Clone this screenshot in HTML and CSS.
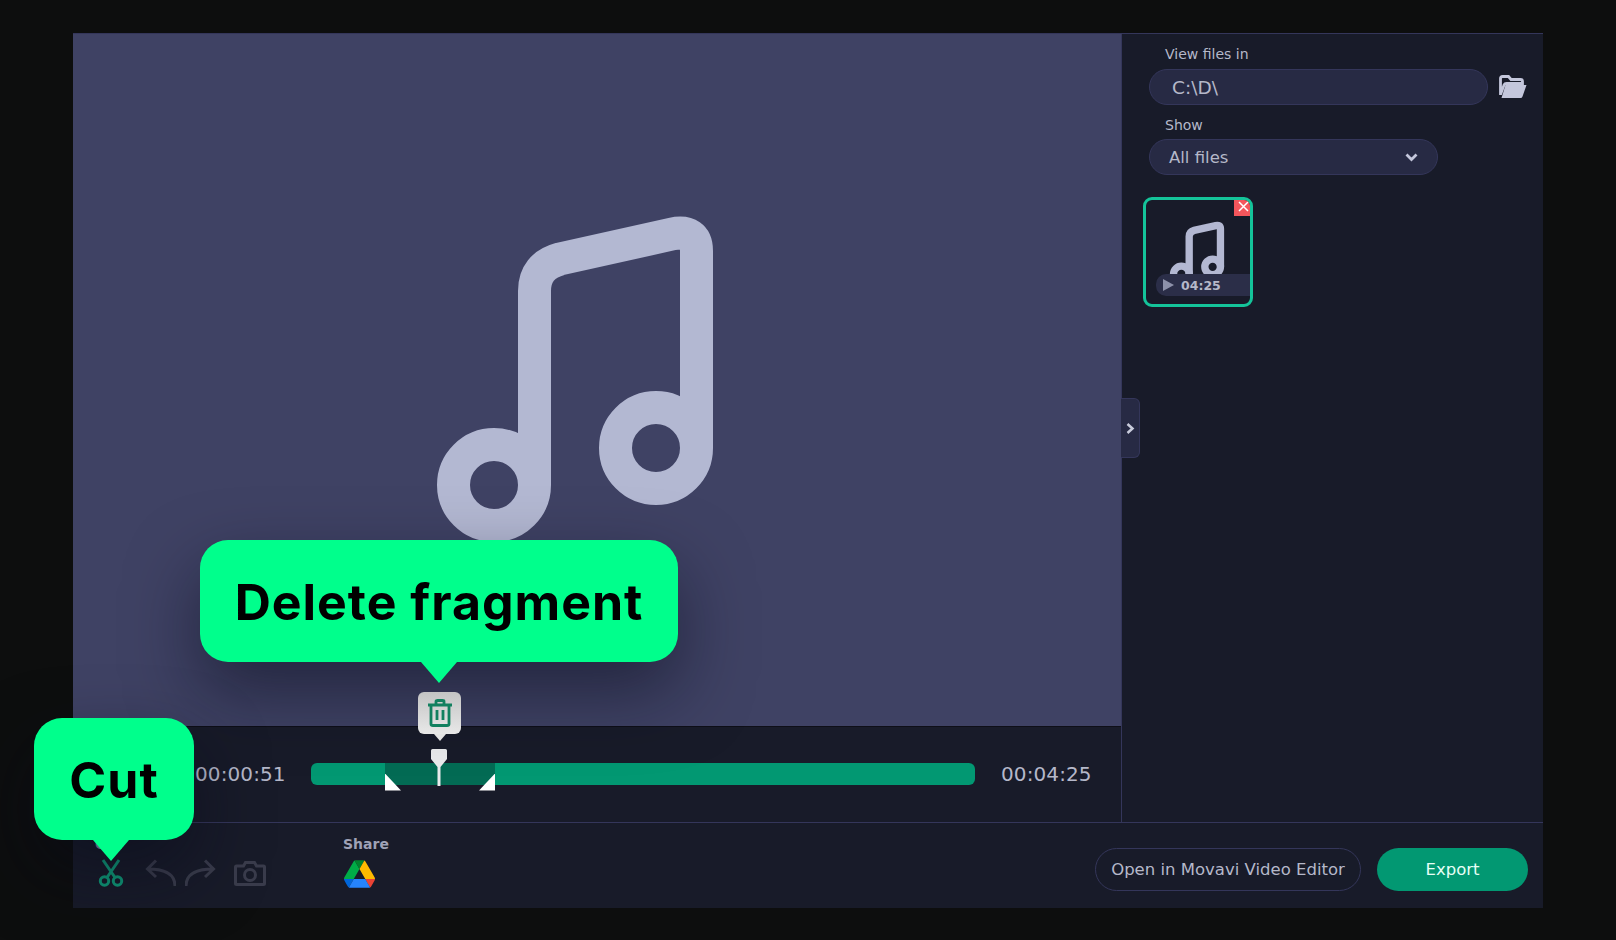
FILE: index.html
```html
<!DOCTYPE html>
<html lang="en">
<head>
<meta charset="utf-8">
<title>Movavi Video Converter - Cut</title>
<link rel="stylesheet" href="styles.css">
</head>
<body>
<div class="app">
  <div class="main">
    <div class="preview">
      <svg class="note" width="290" height="345" viewBox="430 210 290 345" fill="none" stroke="#b3b8d2" stroke-width="33">
        <circle cx="494" cy="484" r="40.5"/>
        <circle cx="656" cy="447" r="40.5"/>
        <path d="M534.5 484V290Q534.5 265 560 258L672 233Q696.5 228 696.5 250V447"/>
      </svg>
    </div>
    <div class="timeline">
      <span class="time">00:00:51</span>
      <div class="bar">
        <div class="seg seg-a"></div>
        <div class="seg seg-cut"></div>
        <div class="seg seg-b"></div>
        <i class="handle handle-l"></i>
        <i class="handle handle-r"></i>
        <svg class="playhead" width="16" height="37" viewBox="0 0 16 37"><path d="M0 1.5Q0 0 1.500 0H14.500Q16 0 16 1.500V10L9.500 18V37H6.500V18L0 10Z" fill="#e9eaec"/></svg>
      </div>
      <span class="time time-end">00:04:25</span>
    </div>
  </div>
  <aside class="side">
    <label class="field-label">View files in</label>
    <div class="path-row">
      <div class="pill path">C:\D\</div>
      <svg class="folder" width="28" height="24" viewBox="0 0 28 24"><path d="M1.500 20V3.500Q1.500 1.500 3.500 1.500H9.500L12 4.500H21.500Q23.500 4.500 23.500 6.500V8.500H7.500Q5.800 8.500 5 10L1.500 19.500" fill="none" stroke="#c4c7dc" stroke-width="2.800"/><path d="M6.500 10H27.500L23.500 21.500Q23 23 21.500 23H2.500Z" fill="#c4c7dc"/></svg>
    </div>
    <label class="field-label field-show">Show</label>
    <div class="pill select">All files
      <svg width="13" height="9" viewBox="0 0 13 9"><path d="M1.500 1.500L6.500 6.500L11.500 1.500" fill="none" stroke="#c4c7dc" stroke-width="2.800"/></svg>
    </div>
    <div class="thumb">
      <svg class="thumb-note" width="56" height="62" viewBox="430 210 290 320" fill="none" stroke="#b3b8d2" stroke-width="38">
        <circle cx="494" cy="484" r="40.5"/>
        <circle cx="656" cy="447" r="40.5"/>
        <path d="M534.5 484V290Q534.5 265 560 258L672 233Q696.5 228 696.5 250V447"/>
      </svg>
      <div class="duration">
        <svg width="11" height="12" viewBox="0 0 11 12"><path d="M0 0L11 6L0 12Z" fill="#8d91aa"/></svg>
        <span>04:25</span>
      </div>
      <button class="close"><svg width="11" height="11" viewBox="0 0 11 11"><path d="M1 1L10 10M10 1L1 10" stroke="#fff" stroke-width="1.500"/></svg></button>
    </div>
    <div class="collapse">
      <svg width="9" height="11" viewBox="0 0 9 11"><path d="M1.500 1L6.500 5.500L1.500 10" fill="none" stroke="#c9ccdc" stroke-width="2.500"/></svg>
    </div>
  </aside>
  <footer class="toolbar">
    <div class="tools">
      <span class="tool-label">Cut</span>
      <div class="tool-icons">
        <svg width="26" height="28" viewBox="0 0 26 28" fill="none" stroke="#0f9a78" stroke-width="3"><circle cx="6.500" cy="22" r="4.200"/><circle cx="19.500" cy="22" r="4.200"/><path d="M9 18.500L21 1M17 18.500L5 1"/></svg>
        <svg class="gap-a" width="31" height="28" viewBox="0 0 31 28" fill="none" stroke="#3a3c4c" stroke-width="3"><path d="M30 27C30 16 22 10 3 10M11 1.500L2.500 10L11 18"/></svg>
        <svg class="gap-b" width="31" height="28" viewBox="0 0 31 28" fill="none" stroke="#3a3c4c" stroke-width="3"><path d="M1 27C1 16 9 10 28 10M20 1.500L28.500 10L20 18"/></svg>
        <svg class="gap-c" width="32" height="25" viewBox="0 0 32 25" fill="none" stroke="#3a3c4c" stroke-width="3"><path d="M2.500 5H9.500L11.500 1.500H20.500L22.500 5H29.500Q30.500 5 30.500 6V22.500Q30.500 23.500 29.500 23.500H2.500Q1.500 23.500 1.500 22.500V6Q1.500 5 2.500 5Z"/><circle cx="16" cy="14" r="5.500"/></svg>
      </div>
    </div>
    <div class="share">
      <span class="share-label">Share</span>
      <svg width="31" height="28" viewBox="0 0 87.300 78"><path d="m6.600 66.850 3.850 6.650c.8 1.400 1.950 2.500 3.300 3.300l13.750-23.800h-27.500c0 1.550.4 3.100 1.200 4.500z" fill="#0066da"/><path d="m43.650 25-13.750-23.800c-1.350.8-2.500 1.900-3.300 3.300l-25.400 44a9.060 9.060 0 0 0 -1.200 4.500h27.500z" fill="#00ac47"/><path d="m73.550 76.800c1.350-.8 2.500-1.900 3.300-3.300l1.600-2.750 7.650-13.250c.8-1.400 1.200-2.950 1.200-4.500h-27.502l5.852 11.500z" fill="#ea4335"/><path d="m43.650 25 13.750-23.800c-1.350-.8-2.900-1.200-4.500-1.200h-18.500c-1.600 0-3.150.45-4.500 1.200z" fill="#00832d"/><path d="m59.800 53h-32.300l-13.750 23.800c1.350.8 2.900 1.200 4.500 1.200h50.800c1.600 0 3.150-.45 4.500-1.200z" fill="#2684fc"/><path d="m73.400 26.500-12.700-22c-.8-1.400-1.950-2.500-3.300-3.300l-13.750 23.800 16.150 28h27.450c0-1.550-.4-3.100-1.200-4.500z" fill="#ffba00"/></svg>
    </div>
    <div class="actions">
      <button class="btn btn-ghost">Open in Movavi Video Editor</button>
      <button class="btn btn-export">Export</button>
    </div>
  </footer>
</div>
<div class="bubble bubble-delete">Delete fragment</div>
<div class="trash">
  <svg width="24" height="28" viewBox="0 0 24 28" fill="none" stroke="#12805f" stroke-width="2.800"><path d="M0 6H24M8 6V2.500Q8 1.500 9.500 1.500H14.500Q16 1.500 16 2.500V6M3 6V25Q3 26.500 5 26.500H19Q21 26.500 21 25V6M9 11V21M15 11V21"/></svg>
</div>
<div class="bubble bubble-cut">Cut</div>
</body>
</html>
```
FILE: styles.css
```css
* { box-sizing: border-box; }
html, body { margin: 0; height: 100%; }
body {
  position: relative;
  background: #0d0e0e;
  padding: 33px 73px 32px;
  font-family: "DejaVu Sans", sans-serif;
  overflow: hidden;
}
.app {
  width: 1470px;
  height: 875px;
  display: grid;
  grid-template-columns: 1048px 422px;
  grid-template-rows: 788px 87px;
  background: #181b29;
  border-top: 1px solid #34365a;
}
.main { display: flex; flex-direction: column; min-width: 0; }
.preview {
  height: 693px;
  background: #3f4264;
  padding: 177px 0 0 357px;
  overflow: hidden;
  border-bottom: 1px solid #0e0f18;
}
.note { display: block; }
.timeline {
  flex: 1;
  display: flex;
  align-items: center;
  padding: 0 0 2px 122px;
}
.time { font-size: 20px; color: #b5b8c9; width: 116px; letter-spacing: 0.1px; }
.time-end { margin-left: 26px; }
.bar {
  position: relative;
  width: 664px;
  height: 22px;
  display: flex;
}
.seg { height: 100%; }
.seg-a { width: 74px; background: #029872; border-radius: 6px 0 0 6px; }
.seg-cut { width: 110px; background: #036b54; }
.seg-b { flex: 1; background: #029872; border-radius: 0 6px 6px 0; }
.handle { position: absolute; top: 11px; width: 16px; height: 17px; background: #fff; }
.handle-l { left: 74px; clip-path: polygon(0 0, 100% 100%, 0 100%); }
.handle-r { left: 168px; clip-path: polygon(100% 0, 100% 100%, 0 100%); }
.playhead { position: absolute; left: 120px; top: -14px; }
.side {
  position: relative;
  border-left: 1px solid #34365a;
  padding: 11px 0 0 27px;
  display: flex;
  flex-direction: column;
  align-items: flex-start;
}
.field-label { font-size: 14px; color: #b5b8c9; padding-left: 16px; line-height: 18px; }
.field-show { margin-top: 11px; }
.path-row { display: flex; align-items: center; gap: 11px; margin-top: 6px; }
.pill {
  background: #272a44;
  border: 1px solid #34365a;
  border-radius: 18px;
  height: 36px;
  color: #b5b8c9;
  font-size: 16.500px;
  display: flex;
  align-items: center;
}
.path { width: 339px; padding-left: 22px; font-size: 18.500px; }
.select {
  width: 289px;
  margin-top: 5px;
  padding: 0 19px 0 19px;
  justify-content: space-between;
}
.thumb {
  position: relative;
  width: 110px;
  height: 110px;
  margin: 22px 0 0 -6px;
  border: 3px solid #14c49a;
  border-radius: 9px;
  padding: 21px 0 0 23px;
  overflow: hidden;
}
.thumb-note { display: block; }
.duration {
  position: absolute;
  left: 10px;
  right: 0;
  top: 74px;
  height: 22px;
  background: #2b2e48;
  border-radius: 10px 0 0 10px;
  display: flex;
  align-items: center;
  gap: 7px;
  padding-left: 7px;
  font-size: 12.500px;
  font-weight: 700;
  color: #b5b8c9;
}
.close {
  position: absolute;
  top: -3px;
  right: -3px;
  width: 19px;
  height: 19px;
  border: 0;
  padding: 0;
  background: #f4565c;
  display: flex;
  align-items: center;
  justify-content: center;
}
.collapse {
  position: absolute;
  left: -1px;
  top: 364px;
  width: 19px;
  height: 60px;
  background: #272a44;
  border-radius: 0 6px 6px 0;
  border: 1px solid #34365a;
  border-left: 0;
  display: flex;
  align-items: center;
  justify-content: center;
}
.toolbar {
  grid-column: 1 / -1;
  border-top: 1px solid #34365a;
  display: flex;
  align-items: flex-start;
  padding: 13px 15px 0 25px;
}
.tools { width: 245px; }
.tool-label { display: block; margin-left: -3px; font-size: 14px; font-weight: 700; color: #9396a8; line-height: 16px; }
.tool-icons { display: flex; align-items: center; margin-top: 7px; height: 28px; }
.gap-a { margin-left: 21px; }
.gap-b { margin-left: 9px; }
.gap-c { margin-left: 18px; }
.share { display: flex; flex-direction: column; align-items: flex-start; }
.share-label { font-size: 14px; font-weight: 700; color: #9fa2b6; line-height: 16px; }
.share svg { margin: 8px 0 0 1px; }
.actions { margin-left: auto; display: flex; gap: 16px; padding-top: 12px; }
.btn {
  height: 43px;
  border-radius: 22px;
  font-family: "DejaVu Sans", sans-serif;
  font-size: 16.500px;
  padding: 0;
}
.btn-ghost { width: 266px; background: transparent; border: 1.500px solid #34365a; color: #b5b8c9; }
.btn-export { width: 151px; background: #029872; border: 0; color: #e6fff6; }
.bubble {
  position: absolute;
  background: #00ff8c;
  color: #000;
  font-family: Inter, sans-serif;
  font-weight: 700;
  font-size: 50px;
  letter-spacing: 1px;
  padding-top: 2px;
  border-radius: 28px;
  display: flex;
  align-items: center;
  justify-content: center;
  box-shadow: 0 30px 70px rgba(8, 10, 25, 0.5);
}
.bubble::after {
  content: "";
  position: absolute;
  left: 50%;
  top: 100%;
  margin-left: -18px;
  border-left: 18px solid transparent;
  border-right: 18px solid transparent;
  border-top: 21px solid #00ff8c;
}
.bubble-delete { left: 200px; top: 540px; width: 478px; height: 122px; }
.bubble-cut { left: 34px; top: 718px; width: 160px; height: 122px; }
.bubble-cut::after { left: 77px; }
.trash {
  position: absolute;
  left: 418px;
  top: 692px;
  width: 43px;
  height: 42px;
  background: linear-gradient(180deg, #c4c4c4, #e8e8e8);
  border-radius: 6px;
  display: flex;
  align-items: center;
  justify-content: center;
}
.trash::after {
  content: "";
  position: absolute;
  left: 50%;
  top: 100%;
  margin-left: -6px;
  border-left: 6px solid transparent;
  border-right: 6px solid transparent;
  border-top: 7px solid #e4e4e4;
}
```
